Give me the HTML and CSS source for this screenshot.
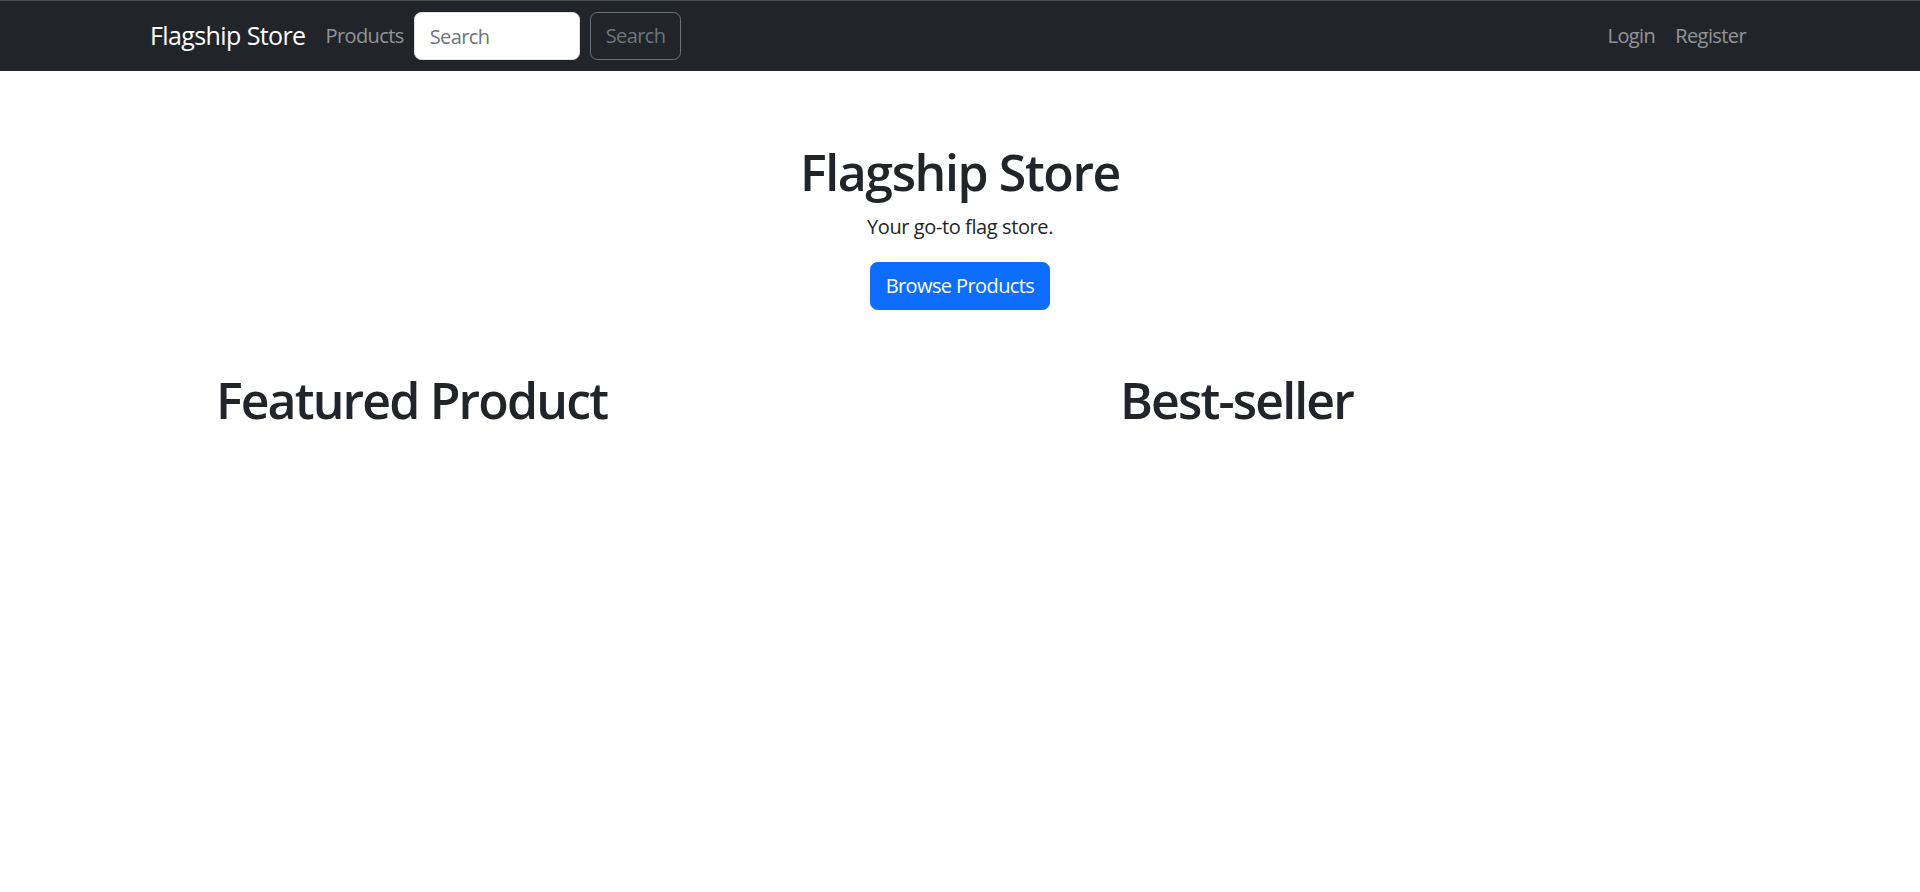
FILE: index.html
```html
<!DOCTYPE html>
<html lang="en">
<head>
<meta charset="utf-8">
<title>Flagship Store</title>
<link rel="stylesheet" href="styles.css">
</head>
<body>
<nav class="navbar">
  <div class="container nav-inner">
    <a class="brand" href="#">Flagship Store</a>
    <a class="nav-link nav-link-first" href="#">Products</a>
    <form class="search-form">
      <input class="search-input" type="search" placeholder="Search">
      <button class="search-btn" type="button">Search</button>
    </form>
    <div class="nav-right">
      <a class="nav-link" href="#">Login</a>
      <a class="nav-link" href="#">Register</a>
    </div>
  </div>
</nav>
<main>
  <section class="container hero">
    <h1 class="hero-title">Flagship Store</h1>
    <p class="hero-lead">Your go-to flag store.</p>
    <a class="btn-primary" href="#">Browse Products</a>
  </section>
  <section class="container products">
    <div class="product-col">
      <div class="product-card">
        <h1 class="section-title">Featured Product</h1>
      </div>
    </div>
    <div class="product-col">
      <div class="product-card">
        <h1 class="section-title">Best-seller</h1>
      </div>
    </div>
  </section>
</main>
</body>
</html>
```
FILE: styles.css
```css
* {
  box-sizing: border-box;
}

html, body {
  margin: 0;
  padding: 0;
}

body {
  font-family: "Open Sans", "Noto Sans", "Liberation Sans", sans-serif;
  font-size: 20px;
  line-height: 1.5;
  letter-spacing: -0.03em;
  color: #212529;
  background: #fff;
}

.container {
  max-width: 1650px;
  margin: 0 auto;
  padding: 0 15px;
}

/* Navbar */
.navbar {
  background: #212529;
  border-top: 1px solid #4a4f55;
  padding: 10px 0;
}

.nav-inner {
  display: flex;
  align-items: center;
  height: 50px;
}

.brand {
  font-size: 25px;
  line-height: 37.5px;
  color: #fff;
  text-decoration: none;
  margin-right: 20px;
  white-space: nowrap;
}

.nav-link {
  color: rgba(255, 255, 255, 0.52);
  text-decoration: none;
  font-size: 20px;
  line-height: 30px;
  padding: 0 10px;
  white-space: nowrap;
}

.nav-link-first {
  padding-left: 0;
}

.search-form {
  display: flex;
  align-items: center;
  gap: 10px;
}

.search-input {
  width: 166px;
  height: 48px;
  border: 1px solid #dee2e6;
  border-radius: 7.5px;
  padding: 7.5px 15px;
  font-family: inherit;
  font-size: 20px;
  letter-spacing: -0.03em;
  color: #212529;
  background: #fff;
  outline: none;
}

.search-input::placeholder {
  color: #6c757d;
}

.search-btn {
  height: 48px;
  padding: 7.5px 15px;
  border: 1px solid #6c757d;
  border-radius: 7.5px;
  background: transparent;
  color: #6c757d;
  font-family: inherit;
  font-size: 20px;
  letter-spacing: -0.03em;
  line-height: 30px;
}

.nav-right {
  display: flex;
  margin-left: auto;
  margin-right: 14px;
}

/* Hero */
.hero {
  text-align: center;
  padding-top: 71px;
  padding-bottom: 60px;
}

.hero-title {
  font-size: 50px;
  line-height: 60px;
  font-weight: 600;
  letter-spacing: -0.028em;
  margin: 0 0 10px;
}

.hero-lead {
  letter-spacing: -0.02em;
  margin: 0 0 20px;
}

.btn-primary {
  display: inline-block;
  background: #0d6efd;
  border: 1px solid #0d6efd;
  color: #fff;
  text-decoration: none;
  padding: 8px 15px;
  border-radius: 7.5px;
  line-height: 30px;
  vertical-align: top;
}

/* Products */
.products {
  display: grid;
  grid-template-columns: 1fr 1fr;
  column-gap: 30px;
}

.product-card {
  width: 523px;
  text-align: center;
}

.section-title {
  font-size: 50px;
  line-height: 60px;
  font-weight: 600;
  letter-spacing: -0.037em;
  margin: 0 0 10px;
}
```
